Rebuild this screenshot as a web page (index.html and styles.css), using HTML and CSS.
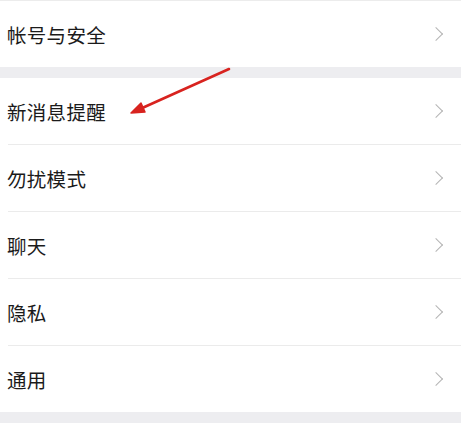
FILE: index.html
```html
<!DOCTYPE html>
<html lang="zh-CN">
<head>
  <meta charset="UTF-8">
  <meta name="viewport" content="width=device-width, initial-scale=1.0">
  <title>设置</title>
  <link rel="stylesheet" href="styles.css">
</head>
<body>
  <div class="page">
    <div class="group group-top">
      <div class="row"><span class="label">帐号与安全</span><span class="chevron"></span></div>
    </div>

    <div class="group">
      <div class="row"><span class="label">新消息提醒</span><span class="chevron"></span></div>
      <div class="row"><span class="label">勿扰模式</span><span class="chevron"></span></div>
      <div class="row"><span class="label">聊天</span><span class="chevron"></span></div>
      <div class="row"><span class="label">隐私</span><span class="chevron"></span></div>
      <div class="row"><span class="label">通用</span><span class="chevron"></span></div>
    </div>

    <!-- red annotation arrow drawn over the list -->
    <svg class="annotation" width="461" height="423" viewBox="0 0 461 423">
      <line x1="229" y1="69" x2="140" y2="109" stroke="#d8231f" stroke-width="2.6" stroke-linecap="round"/>
      <path d="M131 113 L141 103 L145 112 Z" fill="#d8231f" stroke="#d8231f" stroke-width="1.5" stroke-linejoin="round"/>
    </svg>
  </div>
</body>
</html>
```

FILE: styles.css
```css
*, *::before, *::after {
  box-sizing: border-box;
}

body {
  margin: 0;
  padding: 0;
  background: #ededf0;
  font-family: "Noto Sans CJK SC", "Noto Sans", sans-serif;
  color: #1b1b1b;
}

.page {
  position: relative;
  width: 461px;
  height: 423px;
  overflow: hidden;
  display: flex;
  flex-direction: column;
  gap: 11px;
}

.group {
  background: #fff;
  padding-left: 8px;
}

.group-top {
  border-top: 1px solid #ececec;
}

.row {
  height: 67px;
  display: flex;
  align-items: center;
  justify-content: space-between;
  padding-right: 18px;
  border-bottom: 1px solid #ebebeb;
}

.group-top .row {
  height: 66px;
}

.row:last-child {
  border-bottom: none;
  height: 66px;
}

.label {
  font-size: 19.5px;
  letter-spacing: 0.3px;
  margin-left: -1px;
}

.chevron {
  width: 10px;
  height: 10px;
  border-top: 1.6px solid #b4b4b4;
  border-right: 1.6px solid #b4b4b4;
  transform: rotate(45deg);
  margin-right: 2px;
}

.annotation {
  position: absolute;
  top: 0;
  left: 0;
  pointer-events: none;
}
```
